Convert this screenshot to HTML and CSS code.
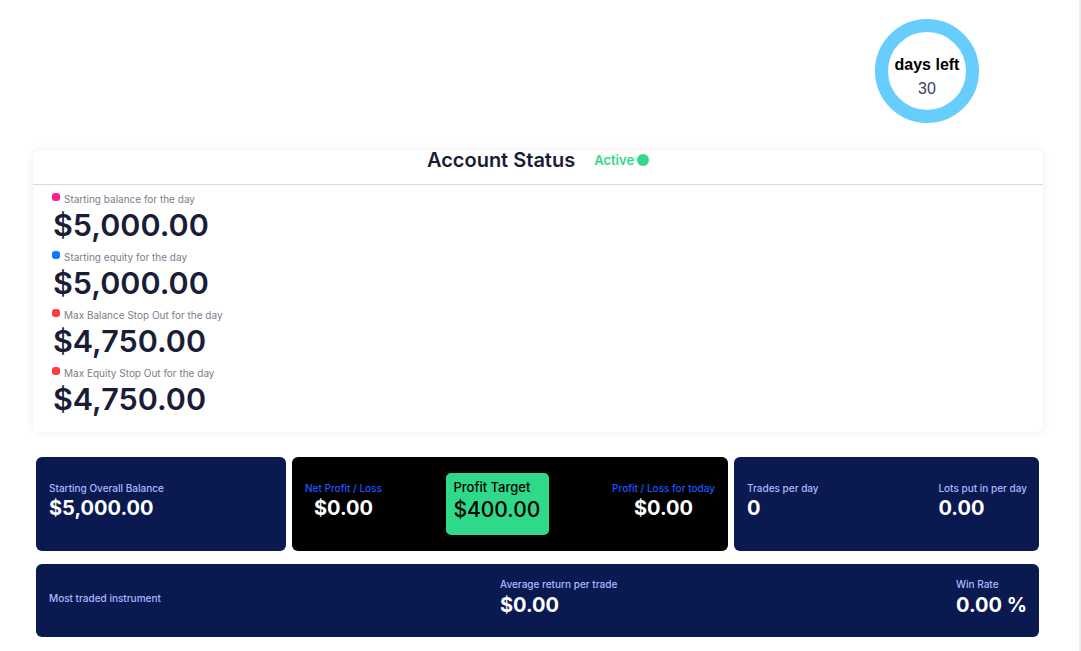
FILE: index.html
```html
<!DOCTYPE html>
<html lang="en">
<head>
    <meta charset="UTF-8">
    <meta name="viewport" content="width=device-width, initial-scale=1.0">
    <title>Account Status</title>
    <link rel="stylesheet" href="styles.css">
</head>
<body>
    <div id="page">
        <div id="days-container">
            <div class="donut">
                <div class="donut-title">days left</div>
                <div class="donut-value">30</div>
            </div>
        </div>

        <div id="status-card">
            <div class="status-header">
                <span class="status-title">Account Status</span>
                <span class="status-active">Active <span class="dot green"></span></span>
            </div>
            <div class="status-body">
                <div class="stat">
                    <div class="stat-label"><span class="mark pink"></span>Starting balance for the day</div>
                    <div class="stat-value">$5,000.00</div>
                </div>
                <div class="stat">
                    <div class="stat-label"><span class="mark blue"></span>Starting equity for the day</div>
                    <div class="stat-value">$5,000.00</div>
                </div>
                <div class="stat">
                    <div class="stat-label"><span class="mark red"></span>Max Balance Stop Out for the day</div>
                    <div class="stat-value">$4,750.00</div>
                </div>
                <div class="stat">
                    <div class="stat-label"><span class="mark red"></span>Max Equity Stop Out for the day</div>
                    <div class="stat-value">$4,750.00</div>
                </div>
            </div>
        </div>

        <div class="tiles-row">
            <div class="tile navy tile-balance">
                <div class="block">
                    <div class="label">Starting Overall Balance</div>
                    <div class="value">$5,000.00</div>
                </div>
            </div>
            <div class="tile black tile-profit">
                <div class="block centered">
                    <div class="label">Net Profit / Loss</div>
                    <div class="value">$0.00</div>
                </div>
                <div class="target">
                    <div class="target-label">Profit Target</div>
                    <div class="target-value">$400.00</div>
                </div>
                <div class="block centered">
                    <div class="label">Profit / Loss for today</div>
                    <div class="value">$0.00</div>
                </div>
            </div>
            <div class="tile navy tile-trades">
                <div class="block">
                    <div class="label">Trades per day</div>
                    <div class="value">0</div>
                </div>
                <div class="block">
                    <div class="label">Lots put in per day</div>
                    <div class="value">0.00</div>
                </div>
            </div>
        </div>

        <div class="tile navy tile-wide">
            <div class="wide-col first">
                <div class="label">Most traded instrument</div>
            </div>
            <div class="wide-col middle">
                <div class="label">Average return per trade</div>
                <div class="value">$0.00</div>
            </div>
            <div class="wide-col last">
                <div class="label">Win Rate</div>
                <div class="value">0.00 %</div>
            </div>
        </div>
    </div>
</body>
</html>
```

FILE: styles.css
```css
html, body {
    margin: 0;
    padding: 0;
    background: #ffffff;
}
body {
    font-family: Inter, "Open Sans", sans-serif;
    color: #1b1d36;
}
#page {
    width: 1081px;
    min-height: 651px;
    border-right: 2px solid #ececec;
    box-sizing: border-box;
    padding: 19px 36px 0 33px;
}
#days-container {
    display: flex;
    justify-content: flex-end;
    padding-right: 64px;
    height: 131px;
}
.donut {
    width: 104px;
    height: 104px;
    border: 13px solid #66cdfd;
    border-radius: 50%;
    box-sizing: border-box;
    display: flex;
    flex-direction: column;
    align-items: center;
    justify-content: center;
    padding-top: 12px;
    font-family: "Liberation Sans", Arial, sans-serif;
}
.donut-title {
    font-size: 16px;
    font-weight: bold;
    color: #000;
}
.donut-value {
    font-size: 16px;
    color: #3a3f63;
    margin-top: 6px;
}
#status-card {
    background: #fff;
    border-radius: 6px;
    box-shadow: 0 0 8px rgba(0, 0, 0, 0.08);
    padding-bottom: 8px;
}
.status-header {
    height: 35px;
    box-sizing: border-box;
    border-bottom: 1px solid #d9d9d9;
    display: flex;
    align-items: flex-start;
    justify-content: center;
    gap: 19px;
}
.status-title {
    font-size: 20px;
    font-weight: 600;
    line-height: 20px;
    color: #1b1d36;
}
.status-active {
    font-size: 13px;
    font-weight: 600;
    line-height: 20px;
    color: #2fd98a;
    display: flex;
    align-items: center;
    gap: 3px;
}
.dot {
    display: inline-block;
    width: 12px;
    height: 12px;
    border-radius: 50%;
}
.green { background: #2fd98a; }
.status-body {
    padding: 7px 0 0 19px;
}
.stat-label {
    font-size: 10px;
    color: #7d7d8a;
    height: 13px;
    display: flex;
    align-items: center;
}
.mark {
    display: inline-block;
    width: 8px;
    height: 8px;
    border-radius: 3px;
    margin-right: 4px;
    margin-top: -4px;
}
.pink { background: #ff1f8f; }
.blue { background: #0d7bff; }
.red { background: #ff3c3c; }
.stat-value {
    font-size: 30.5px;
    font-weight: 600;
    line-height: 40px;
    margin-bottom: 5px;
    margin-left: 1px;
    color: #1b1d36;
}
.tiles-row {
    display: flex;
    gap: 6px;
    margin: 25px 4px 13px 3px;
}
.tile {
    border-radius: 6px;
    height: 94px;
    box-sizing: border-box;
    display: flex;
    align-items: center;
    padding-bottom: 3px;
}
.navy { background: #0a1a51; }
.black { background: #000; }
.label {
    font-size: 10px;
    font-weight: 500;
    color: #aab8ff;
    white-space: nowrap;
}
.black .label {
    color: #1f56ff;
}
.value {
    font-size: 20px;
    font-weight: 700;
    color: #fff;
    line-height: 29px;
}
.tile-balance {
    width: 250px;
    padding-left: 13px;
    padding-right: 13px;
}
.tile-profit {
    width: 436px;
    padding-left: 13px;
    padding-right: 13px;
    padding-bottom: 0;
    justify-content: space-between;
}
.tile-profit .block {
    margin-bottom: 3px;
}
.centered {
    text-align: center;
}
.target {
    background: #2fd98a;
    border-radius: 5px;
    width: 103px;
    height: 62px;
    box-sizing: border-box;
    padding: 6px 0 0 7px;
    color: #000;
    margin-left: 2px;
}
.target-label {
    font-size: 13px;
    font-weight: 500;
}
.target-value {
    font-size: 21px;
    font-weight: 500;
    line-height: 30px;
}
.tile-wide {
    margin: 0 4px 0 3px;
    height: 73px;
    padding: 0 12px 3px 13px;
}
.tile-wide .value {
    line-height: 31px;
}
.tile-trades {
    width: 305px;
    padding-left: 13px;
    padding-right: 12px;
    justify-content: space-between;
}
.wide-col.first {
    flex: 1;
    margin-top: -3px;
}
.wide-col.middle {
    flex: 0 0 456px;
}
.wide-col.last {
    flex: 0 0 auto;
}
```
